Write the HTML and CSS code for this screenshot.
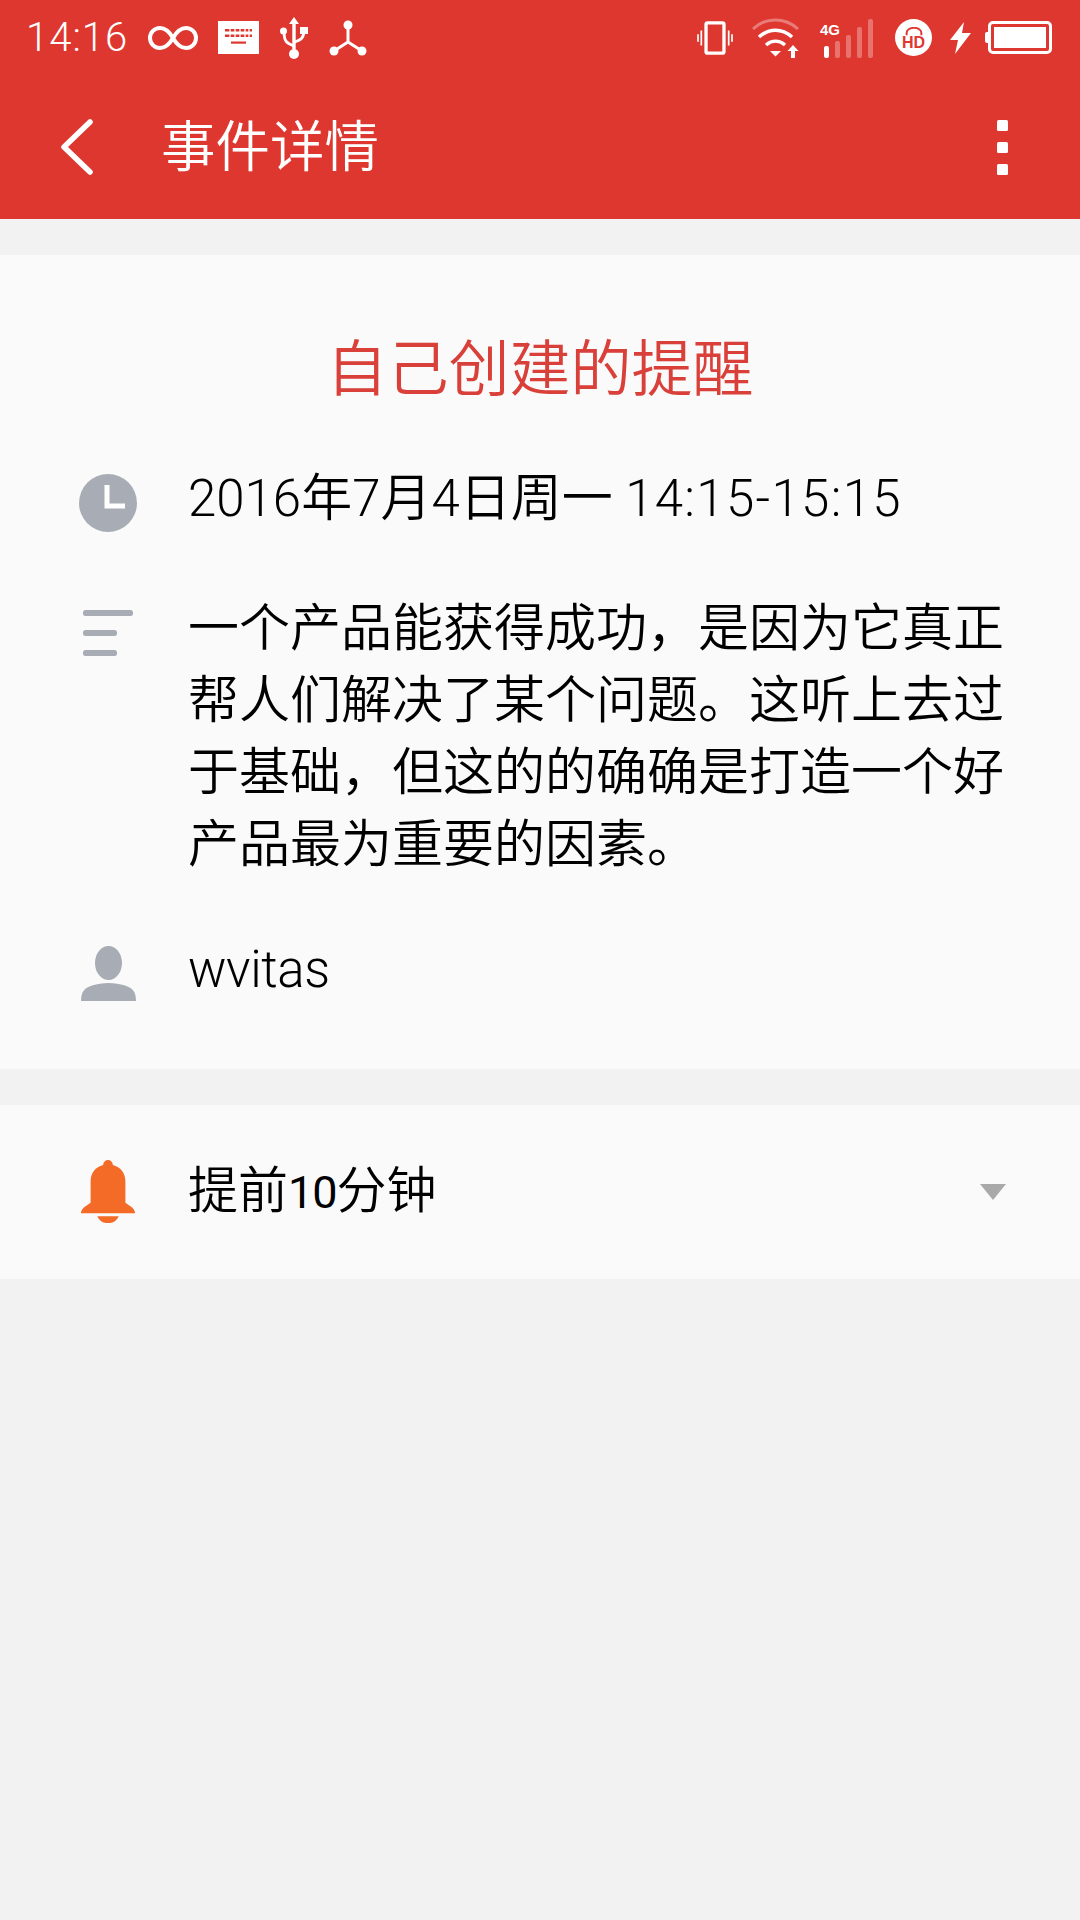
FILE: index.html
```html
<!DOCTYPE html>
<html lang="zh-CN">
<head>
<meta charset="utf-8">
<title>事件详情</title>
<link rel="stylesheet" href="styles.css">
</head>
<body>
<header class="top">
  <div class="status">
    <div class="status-left">
      <span class="time">14:16</span>
      <svg class="ic-inf" viewBox="0 0 50 28"><path d="M25 14C21 7 17 4 12 4a10 10 0 0 0 0 20c5 0 9-3 13-10s8-10 13-10a10 10 0 0 1 0 20c-5 0-9-3-13-10z" fill="none" stroke="#fff" stroke-width="4"/></svg>
      <svg class="ic-kb" viewBox="0 0 41 33"><rect width="41" height="33" fill="#fff"/><path d="M7 8h27v2.500H7zM7 13.500h27v2.500H7z" fill="#de3730"/><path d="M12 7v10M17 7v10M22 7v10M27 7v10M31 7v10" stroke="#fff" stroke-width="1.300"/><path d="M13 20.500h15v2.200H13z" fill="#de3730"/></svg>
      <svg class="ic-usb" viewBox="0 0 30 44"><path d="M15 1l5 7h-3.300v25h-3.400V8H10z" fill="#fff"/><circle cx="15" cy="38" r="5" fill="#fff"/><path d="M15 30c-8-3-10-5-10-15M15 26c8-2 10-5 10-12" fill="none" stroke="#fff" stroke-width="2.800"/><circle cx="4.500" cy="15" r="3.500" fill="#fff"/><rect x="21" y="11" width="8" height="7" fill="#fff"/></svg>
      <svg class="ic-hub" viewBox="0 0 38 38"><path d="M19 6v17L5 32M19 23l14 9" fill="none" stroke="#fff" stroke-width="3"/><circle cx="19" cy="6" r="4.500" fill="#fff"/><circle cx="5" cy="32" r="4.500" fill="#fff"/><circle cx="33" cy="32" r="4.500" fill="#fff"/></svg>
    </div>
    <div class="status-right">
      <svg class="ic-vib" viewBox="0 0 38 36"><rect x="9.500" y="2" width="19" height="32" rx="1.500" fill="none" stroke="#fff" stroke-width="3.500"/><path d="M4.500 10v16M1 14v8M33.500 10v16M37 14v8" stroke="#fff" stroke-width="1.800" fill="none"/></svg>
      <svg class="ic-wifi" viewBox="0 0 50 40"><path d="M1 11C13-1 33-1 46 11" fill="none" stroke="#fff" stroke-opacity=".35" stroke-width="3"/><path d="M7 19c10-9 23-9 33 0M14 27c6-5 13-5 19 0" fill="none" stroke="#fff" stroke-width="3.500"/><path d="M18 33h11l-5.500 5.500z" fill="#fff"/><path d="M41 27l5.500 6H43v7h-4v-7h-3.500z" fill="#fff"/></svg>
      <div class="signal">
        <span class="net">4G</span>
        <svg class="ic-bars" viewBox="0 0 54 40"><rect x="4" y="28" width="5" height="12" rx="2" fill="#fff"/><rect x="15" y="23" width="5" height="17" rx="2" fill="#fff" fill-opacity=".3"/><rect x="26" y="17" width="5" height="23" rx="2" fill="#fff" fill-opacity=".3"/><rect x="37" y="9" width="5" height="31" rx="2" fill="#fff" fill-opacity=".3"/><rect x="48" y="1" width="5" height="39" rx="2" fill="#fff" fill-opacity=".3"/></svg>
      </div>
      <div class="hd"><svg class="ic-ph" viewBox="0 0 22 11"><path d="M2 10V7a9 6 0 0 1 18 0v3" fill="none" stroke="#de3730" stroke-width="2.400"/></svg><span class="hd-text">HD</span></div>
      <svg class="ic-bolt" viewBox="0 0 22 32"><path d="M14 0L0 18h8l-3 14L21 11h-9z" fill="#fff"/></svg>
      <div class="battery"><span class="bat-nub"></span><span class="bat-fill"></span></div>
    </div>
  </div>
  <div class="appbar">
    <svg class="ic-back" viewBox="0 0 34 56"><path d="M30 3L4 28l26 25" fill="none" stroke="#fff" stroke-width="5.500" stroke-linecap="round" stroke-linejoin="round"/></svg>
    <h1 class="page-title">事件详情</h1>
    <div class="more"><i></i><i></i><i></i></div>
  </div>
</header>

<main class="content">
  <section class="card detail">
    <h2 class="event-title">自己创建的提醒</h2>
    <div class="row row-time">
      <svg class="icon" viewBox="0 0 58 58"><circle cx="29" cy="29" r="29" fill="#a8adb5"/><path d="M28 11v21h18" fill="none" stroke="#fff" stroke-width="5"/></svg>
      <p class="text">2016年7月4日周一 <span class="range">14:15-15:15</span></p>
    </div>
    <div class="row row-desc">
      <svg class="icon icon-lines" viewBox="0 0 58 52"><rect x="4" y="4" width="50" height="6" rx="2.500" fill="#a8adb5"/><rect x="4" y="24" width="34" height="6" rx="2.500" fill="#a8adb5"/><rect x="4" y="44" width="34" height="6" rx="2.500" fill="#a8adb5"/></svg>
      <p class="text">一个产品能获得成功，是因为它真正帮人们解决了某个问题。这听上去过于基础，但这的的确确是打造一个好产品最为重要的因素。</p>
    </div>
    <div class="row row-user">
      <svg class="icon" viewBox="0 0 58 56"><ellipse cx="29.500" cy="17" rx="13.500" ry="17" fill="#a8adb5"/><path d="M2 55c0-10 4-13 11-15.500 5-1.500 11-2.500 16.500-2.500s11.500 1 16.500 2.500c7 2.500 11 5.500 11 15.500z" fill="#a8adb5"/></svg>
      <p class="text user-name">wvitas</p>
    </div>
  </section>
  <section class="card reminder">
    <svg class="icon" viewBox="-1 0 60 66"><path d="M29 0a5 5 0 0 1 5 5c8 2 13 8 13 17v22l7 5c2 2 3 4 3 6H1c0-2 1-4 3-6l7-5V22c0-9 5-15 13-17a5 5 0 0 1 5-5z" fill="#f46a27"/><path d="M18 58h22c-2 5-6 7-11 7s-9-2-11-7z" fill="#f46a27"/></svg>
    <p class="text">提前<span class="num">10</span>分钟</p>
    <span class="caret"></span>
  </section>
</main>
</body>
</html>
```
FILE: styles.css
```css
* { box-sizing: border-box; margin: 0; padding: 0; }
html, body { width: 1080px; height: 1920px; overflow: hidden; }
body {
  background: #f2f2f2;
  color: #000;
  font-family: Roboto, "Noto Sans CJK SC", sans-serif;
  font-weight: 350;
}
.top { background: #de3730; color: #fff; height: 219px; }
.status {
  height: 75px;
  display: flex;
  justify-content: space-between;
  align-items: center;
  padding: 0 28px 0 26px;
}
.status-left, .status-right { display: flex; align-items: center; }
.time { font-size: 40px; line-height: 1; letter-spacing: 1px; width: 122px; font-weight: 300; }
.ic-inf { width: 50px; height: 28px; }
.ic-kb { width: 41px; height: 33px; margin-left: 20px; }
.ic-usb { width: 30px; height: 44px; margin-left: 20px; }
.ic-hub { width: 38px; height: 38px; margin-left: 20px; }
.ic-vib { width: 38px; height: 34px; }
.ic-wifi { width: 50px; height: 40px; margin-left: 18px; }
.signal { position: relative; width: 54px; height: 40px; margin-left: 18px; }
.net { position: absolute; left: 0; top: 4px; font: 700 15px/1 "Liberation Sans", sans-serif; }
.ic-bars { position: absolute; left: 0; top: 0; width: 54px; height: 40px; }
.hd {
  width: 37px; height: 37px; border-radius: 50%; background: #fff;
  margin-left: 21px; display: flex; flex-direction: column; align-items: center; justify-content: center;
}
.ic-ph { width: 20px; height: 9px; }
.hd-text { color: #de3730; font: 700 16px/13px "Liberation Sans", sans-serif; }
.ic-bolt { width: 22px; height: 32px; margin-left: 18px; }
.battery {
  position: relative; width: 64px; height: 33px; margin-left: 16px;
  border: 3px solid #fff; border-radius: 5px; padding: 3px;
}
.bat-fill { display: block; width: 100%; height: 100%; background: #fff; }
.bat-nub { position: absolute; left: -6px; top: 8px; width: 3px; height: 11px; background: #fff; border-radius: 2px 0 0 2px; }
.appbar { height: 144px; display: flex; align-items: center; padding: 0 72px 0 60px; }
.ic-back { width: 34px; height: 56px; flex: none; }
.page-title { font-size: 54.500px; font-weight: 350; line-height: 1; margin-left: 67px; flex: 1; }
.more { display: flex; flex-direction: column; gap: 11px; }
.more i { display: block; width: 11px; height: 11px; background: #fff; border-radius: 1.500px; }

.content { padding-top: 36px; display: flex; flex-direction: column; gap: 36px; }
.card { background: #fafafa; }
.detail { height: 814px; padding-top: 79px; }
.event-title { font-size: 61px; line-height: 72px; font-weight: 350; color: #d9403a; text-align: center; }
.row { display: flex; padding: 0 0 0 79px; }
.icon { width: 58px; height: 58px; flex: none; }
.text { font-size: 51px; line-height: 72px; margin-left: 51px; width: 826px; }
.range { letter-spacing: 1.300px; }
.user-name { letter-spacing: -0.400px; }
.num { font-size: 45px; font-weight: 400; letter-spacing: -1px; }
.row-time { margin-top: 56px; align-items: flex-start; }
.row-time .icon { margin-top: 12px; }
.row-time .text { margin-top: 1px; }
.row-desc { margin-top: 58px; }
.row-desc .icon { height: 52px; margin-top: 13px; }
.row-user { margin-top: 53px; }
.row-user .icon { height: 56px; margin-top: 12px; }
.reminder { height: 174px; display: flex; align-items: center; padding: 0 74px 0 79px; }
.reminder .icon { height: 66px; }
.reminder .text { flex: 1; width: auto; font-size: 50px; }
.caret { width: 0; height: 0; border-left: 13px solid transparent; border-right: 13px solid transparent; border-top: 16px solid #a9a9a9; }
```
